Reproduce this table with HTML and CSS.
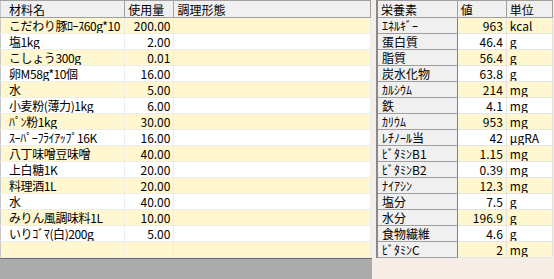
FILE: index.html
```html
<!DOCTYPE html>
<html lang="ja">
<head>
<meta charset="utf-8">
<link rel="stylesheet" href="styles.css">
</head>
<body>
<div class="page">
  <div class="left">
    <table class="grid ing">
      <colgroup><col class="c-name"><col class="c-qty"><col class="c-form"></colgroup>
      <thead>
        <tr><th>材料名</th><th>使用量</th><th>調理形態</th></tr>
      </thead>
      <tbody>
        <tr><td>こだわり豚ﾛｰｽ60g*10</td><td class="num">200.00</td><td></td></tr>
        <tr><td>塩1kg</td><td class="num">2.00</td><td></td></tr>
        <tr><td>こしょう300g</td><td class="num">0.01</td><td></td></tr>
        <tr><td>卵M58g*10個</td><td class="num">16.00</td><td></td></tr>
        <tr><td>水</td><td class="num">5.00</td><td></td></tr>
        <tr><td>小麦粉(薄力)1kg</td><td class="num">6.00</td><td></td></tr>
        <tr><td>ﾊﾟﾝ粉1kg</td><td class="num">30.00</td><td></td></tr>
        <tr><td>ｽｰﾊﾟｰﾌﾗｲｱｯﾌﾟ16K</td><td class="num">16.00</td><td></td></tr>
        <tr><td>八丁味噌豆味噌</td><td class="num">40.00</td><td></td></tr>
        <tr><td>上白糖1K</td><td class="num">20.00</td><td></td></tr>
        <tr><td>料理酒1L</td><td class="num">20.00</td><td></td></tr>
        <tr><td>水</td><td class="num">40.00</td><td></td></tr>
        <tr><td>みりん風調味料1L</td><td class="num">10.00</td><td></td></tr>
        <tr><td>いりｺﾞﾏ(白)200g</td><td class="num">5.00</td><td></td></tr>
        <tr><td></td><td></td><td></td></tr>
      </tbody>
    </table>
    <div class="empty-area"></div>
  </div>
  <div class="right">
    <table class="grid nut">
      <colgroup><col class="n-name"><col class="n-val"><col class="n-unit"></colgroup>
      <thead>
        <tr><th>栄養素</th><th>値</th><th>単位</th></tr>
      </thead>
      <tbody>
        <tr><th>ｴﾈﾙｷﾞｰ</th><td class="num">963</td><td>kcal</td></tr>
        <tr><th>蛋白質</th><td class="num">46.4</td><td>g</td></tr>
        <tr><th>脂質</th><td class="num">56.4</td><td>g</td></tr>
        <tr><th>炭水化物</th><td class="num">63.8</td><td>g</td></tr>
        <tr><th>ｶﾙｼｳﾑ</th><td class="num">214</td><td>mg</td></tr>
        <tr><th>鉄</th><td class="num">4.1</td><td>mg</td></tr>
        <tr><th>ｶﾘｳﾑ</th><td class="num">953</td><td>mg</td></tr>
        <tr><th>ﾚﾁﾉｰﾙ当</th><td class="num">42</td><td>μgRA</td></tr>
        <tr><th>ﾋﾞﾀﾐﾝB1</th><td class="num">1.15</td><td>mg</td></tr>
        <tr><th>ﾋﾞﾀﾐﾝB2</th><td class="num">0.39</td><td>mg</td></tr>
        <tr><th>ﾅｲｱｼﾝ</th><td class="num">12.3</td><td>mg</td></tr>
        <tr><th>塩分</th><td class="num">7.5</td><td>g</td></tr>
        <tr><th>水分</th><td class="num">196.9</td><td>g</td></tr>
        <tr><th>食物繊維</th><td class="num">4.6</td><td>g</td></tr>
        <tr><th>ﾋﾞﾀﾐﾝC</th><td class="num">2</td><td>mg</td></tr>
      </tbody>
    </table>
  </div>
</div>
</body>
</html>
```

FILE: styles.css
```css
html, body {
  margin: 0;
  padding: 0;
  background: #f6eee6;
}
body {
  font-family: "Noto Sans CJK JP", "Noto Sans", sans-serif;
  font-size: 12px;
  color: #000;
  width: 554px;
  height: 279px;
  overflow: hidden;
}
.page {
  display: flex;
  align-items: flex-start;
}
.left {
  width: 372px;
  display: flex;
  flex-direction: column;
}
.grid {
  border-collapse: collapse;
  table-layout: fixed;
}
.grid th, .grid td {
  height: 15px;
  line-height: 15px;
  padding: 0 3px;
  white-space: nowrap;
  overflow: hidden;
  font-weight: normal;
  text-align: left;
}
.ing {
  width: 371px;
  border-left: 1px solid #c8c8c8;
  border-right: 1px solid #d4d4d4;
}
.c-name { width: 124px; }
.c-qty { width: 49px; }
.c-form { width: 196px; }
.ing thead th {
  background: #f0f0f0;
  height: 16px;
  border-top: 1px solid #a0a0a0;
  border-bottom: 1px solid #a0a0a0;
  border-right: 1px solid #a0a0a0;
}
.ing thead th:first-child { padding-left: 8px; }
.ing tbody td {
  border-bottom: 1px solid #ececec;
  border-right: 1px solid #ececec;
}
.ing tbody td:first-child {
  padding-left: 8px;
  letter-spacing: -0.4px;
}
.ing tbody tr:nth-child(odd) td { background: #fff7cf; }
.ing tbody tr:nth-child(even) td { background: #ffffff; }
.num { text-align: right !important; }
.empty-area {
  height: 20px;
  background: #ababab;
  border-top: 1px solid #6e6e6e;
}
.right {
  margin-left: 4px;
}
.nut {
  width: 177px;
  border-left: 2px solid #8a8a8a;
  border-right: 1px solid #8a8a8a;
  border-bottom: 1px solid #8a8a8a;
}
.n-name { width: 80px; }
.n-val { width: 49px; }
.n-unit { width: 46px; }
.nut thead th {
  background: #f0f0f0;
  height: 16px;
  border-top: 1px solid #a0a0a0;
  border-bottom: 1px solid #a0a0a0;
  border-right: 1px solid #a0a0a0;
}
.nut tbody th {
  background: #f0f0f0;
  border-bottom: 1px solid #a0a0a0;
  border-right: 1px solid #808080;
  padding-left: 4px;
}
.nut tbody td {
  border-bottom: 1px solid #e4e4e4;
  border-right: 1px solid #e4e4e4;
}
.nut tbody td.num { padding-right: 3px; }
.nut tbody tr:nth-child(odd) td { background: #fff7cf; }
.nut tbody tr:nth-child(even) td { background: #ffffff; }
```
